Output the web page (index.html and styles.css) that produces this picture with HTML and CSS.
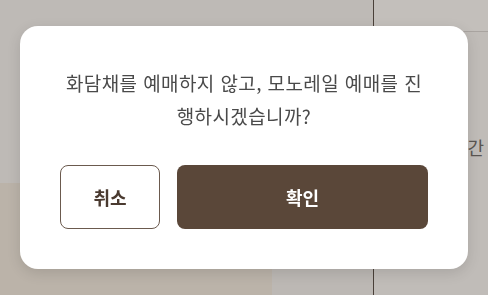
FILE: index.html
```html
<!DOCTYPE html>
<html lang="ko">
<head>
  <meta charset="UTF-8">
  <meta name="viewport" content="width=device-width, initial-scale=1.0">
  <title>예매 확인</title>
  <link rel="stylesheet" href="styles.css">
</head>
<body>
  <div class="page">
    <div class="page-left">
      <div class="left-top"></div>
      <div class="left-bottom">
        <div class="left-bottom-card"></div>
      </div>
    </div>
    <div class="page-right">
      <div class="right-head"></div>
      <div class="right-body">
        <span class="right-label">기간</span>
      </div>
    </div>
  </div>

  <div class="overlay">
    <div class="modal">
      <p class="modal-text">화담채를 예매하지 않고, 모노레일 예매를 진행하시겠습니까?</p>
      <div class="modal-actions">
        <button class="btn btn-cancel">취소</button>
        <button class="btn btn-confirm">확인</button>
      </div>
    </div>
  </div>
</body>
</html>
```

FILE: styles.css
```css
body {
  margin: 0;
  padding: 0;
  font-family: "Noto Sans CJK KR", "Noto Sans", sans-serif;
  background-color: #c0bcb8;
}

.page {
  display: flex;
  height: 295px;
  overflow: hidden;
}

.page-left {
  width: 373px;
  display: flex;
  flex-direction: column;
  border-right: 1px solid #4a4039;
}

.left-top {
  height: 183px;
  background-color: #bebab6;
}

.left-bottom {
  flex: 1;
  display: flex;
  background-color: #bcb8b4;
}

.left-bottom-card {
  width: 272px;
  background-color: #bbb3a9;
}

.page-right {
  flex: 1;
  display: flex;
  flex-direction: column;
}

.right-head {
  height: 31px;
  border-bottom: 1px solid #a9a4a0;
  background-color: #c3bfbb;
}

.right-body {
  flex: 1;
  padding-top: 103px;
  display: flex;
  justify-content: flex-end;
}

.right-label {
  font-size: 18px;
  color: #5a5652;
  line-height: 24px;
  margin-right: 4px;
}

.overlay {
  position: fixed;
  top: 0;
  left: 0;
  right: 0;
  bottom: 0;
  display: flex;
  justify-content: center;
  padding-top: 26px;
}

.modal {
  width: 368px;
  height: 163px;
  padding: 40px;
  background-color: #fff;
  border-radius: 18px;
  box-shadow: 0 4px 14px rgba(0, 0, 0, 0.12);
  display: flex;
  flex-direction: column;
}

.modal-text {
  margin: 0 0 33px;
  font-size: 19px;
  letter-spacing: 0.4px;
  line-height: 33px;
  color: #4a4a4a;
  text-align: center;
}

.modal-actions {
  display: flex;
  gap: 17px;
}

.btn {
  height: 64px;
  border-radius: 8px;
  font-family: inherit;
  font-size: 18px;
  font-weight: bold;
  cursor: pointer;
}

.btn-cancel {
  width: 100px;
  background-color: #fff;
  border: 1px solid #6b5a4e;
  color: #4a3a30;
}

.btn-confirm {
  flex: 1;
  background-color: #5a4739;
  border: none;
  color: #fff;
}
```
